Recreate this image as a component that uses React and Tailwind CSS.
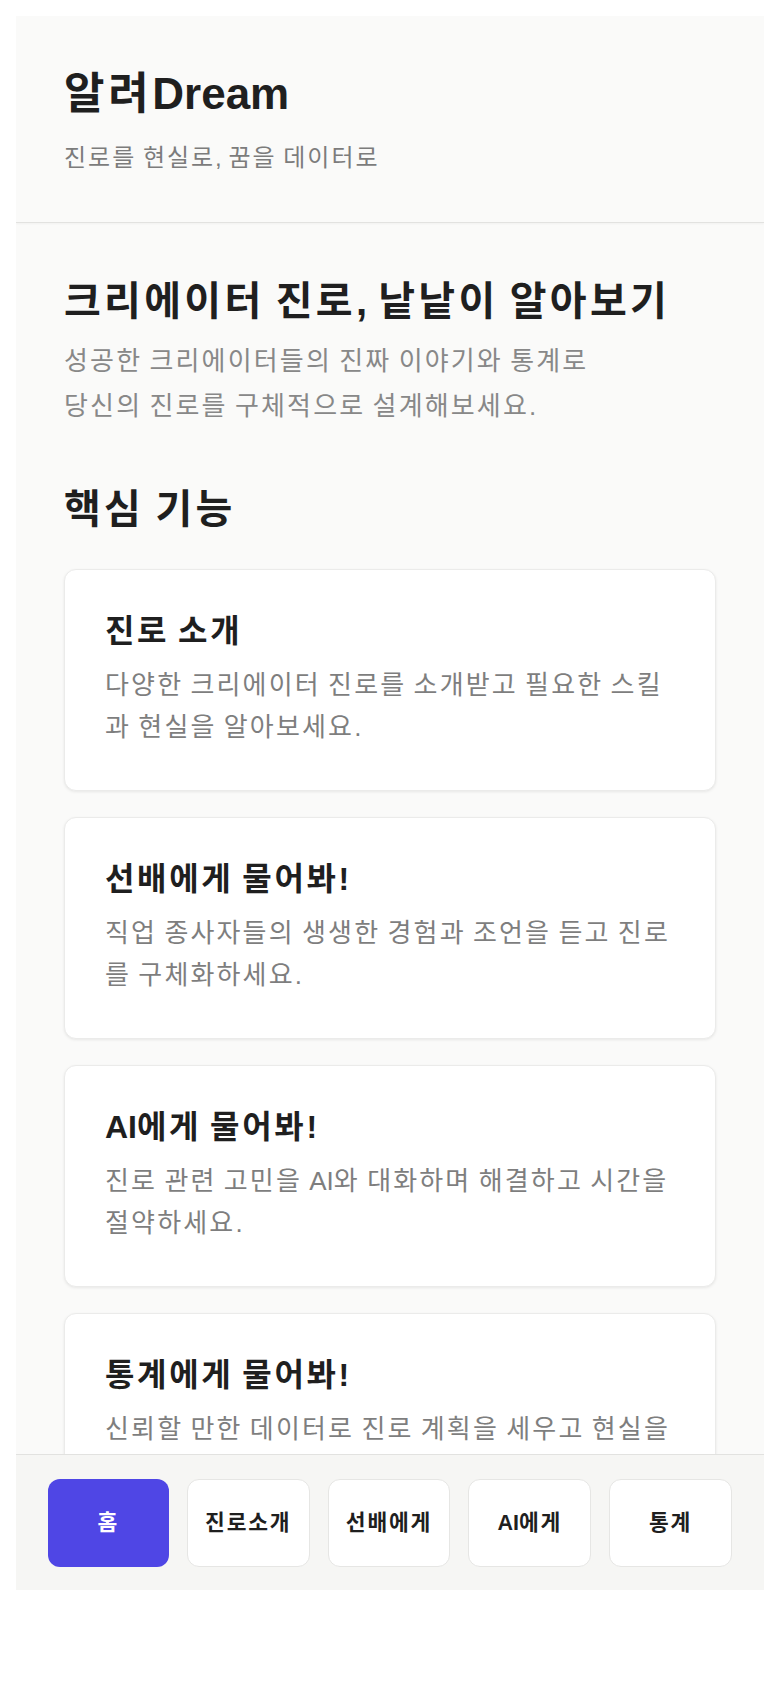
import React from "react";

const cards = [
  {
    title: "진로 소개",
    text: "다양한 크리에이터 진로를 소개받고 필요한 스킬과 현실을 알아보세요.",
  },
  {
    title: "선배에게 물어봐!",
    text: "직업 종사자들의 생생한 경험과 조언을 듣고 진로를 구체화하세요.",
  },
  {
    title: "AI에게 물어봐!",
    text: "진로 관련 고민을 AI와 대화하며 해결하고 시간을 절약하세요.",
  },
  {
    title: "통계에게 물어봐!",
    text: "신뢰할 만한 데이터로 진로 계획을 세우고 현실을 파악하세요.",
  },
];

const navs = ["홈", "진로소개", "선배에게", "AI에게", "통계"];

function K({ t }) {
  const parts = t.split(/([\uAC00-\uD7A3]+)/);
  return parts.map((p, i) =>
    /[\uAC00-\uD7A3]/.test(p) ? (
      <span key={i} className="tracking-[0.083em]">
        {p}
      </span>
    ) : (
      <React.Fragment key={i}>{p}</React.Fragment>
    )
  );
}

export default function App() {
  return (
    <div
      className="min-h-[1688px] bg-white pt-4 px-4"
      style={{ fontFamily: '"Liberation Sans", "Noto Sans CJK KR", sans-serif' }}
    >
      <div className="h-[1574px] flex flex-col bg-[#fafaf9] overflow-hidden">
        <header className="px-12 pt-[51px] pb-[46px] border-b border-[#e2e2e0] shadow-[0_1px_2px_rgba(0,0,0,0.04)]">
          <h1 className="text-[44px] leading-[53px] font-bold text-[#1f1f1f]">
            <K t="알려Dream" />
          </h1>
          <p className="mt-[20px] text-[24px] leading-[36px] text-[#7c7c7c]">
            <K t="진로를 현실로, 꿈을 데이터로" />
          </p>
        </header>

        <main className="flex-1 overflow-hidden px-12 pt-[52px]">
          <h2 className="text-[40px] leading-[52px] font-bold text-[#1f1f1f]">
            <K t="크리에이터 진로, 낱낱이 알아보기" />
          </h2>
          <p className="mt-[12px] text-[26px] leading-[45px] text-[#888888]">
            <K t="성공한 크리에이터들의 진짜 이야기와 통계로" />
            <br />
            <K t="당신의 진로를 구체적으로 설계해보세요." />
          </p>

          <h2 className="mt-[54px] text-[40px] leading-[52px] font-bold text-[#1f1f1f]">
            <K t="핵심 기능" />
          </h2>

          <div className="mt-[34px] flex flex-col gap-[26px]">
            {cards.map((c) => (
              <div
                key={c.title}
                className="bg-white border border-[#ebebea] rounded-xl shadow-[0_1px_3px_rgba(0,0,0,0.08)] px-10 pt-[41px] pb-[42px]"
              >
                <h3 className="text-[32px] leading-[40px] font-bold text-[#1f1f1f]">
                  <K t={c.title} />
                </h3>
                <p className="mt-[14px] text-[26px] leading-[41.5px] text-[#7e7e7e]">
                  <K t={c.text} />
                </p>
              </div>
            ))}
          </div>
        </main>

        <nav className="border-t border-[#e2e2e0] bg-[#f6f6f4] px-8 pt-6 pb-[23px] flex gap-[18px]">
          {navs.map((n, i) => (
            <button
              key={n}
              className={
                i === 0
                  ? "flex-1 h-[88px] rounded-xl bg-[#4f46e5] text-white text-[21.5px] font-bold flex items-center justify-center"
                  : "flex-1 h-[88px] rounded-xl bg-white border border-[#e6e6e4] text-[#1f1f1f] text-[21.5px] font-bold flex items-center justify-center"
              }
            >
              <span>
                <K t={n} />
              </span>
            </button>
          ))}
        </nav>
      </div>
    </div>
  );
}
